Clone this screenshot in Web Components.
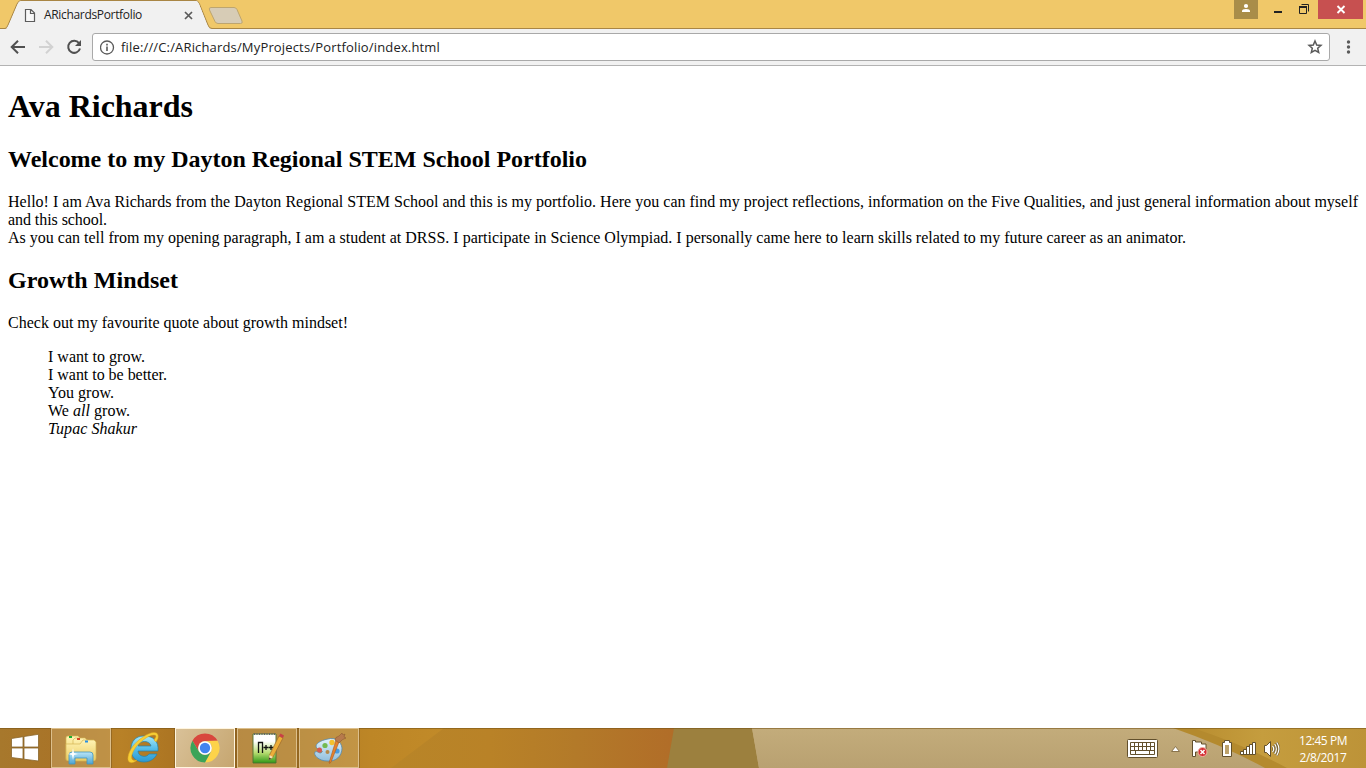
<!DOCTYPE html>
<html lang="en"><head><meta charset="utf-8"><title>ARichardsPortfolio</title>
<style>html,body{margin:0;height:100%;overflow:hidden;background:#fff}</style></head>
<body>
<desktop-screen></desktop-screen>
<script>
const define=(name,css,html)=>customElements.define(name,class extends HTMLElement{
  constructor(){super();this.attachShadow({mode:'open'}).innerHTML=`<style>*{box-sizing:border-box}svg{display:block;flex:none}${css}</style>${html}`;}
});

/* A single line of text whose tracking is adjusted to a given width. */
customElements.define('fit-line',class extends HTMLElement{
  constructor(){super();this.attachShadow({mode:'open'}).innerHTML='<style>:host{display:block;white-space:nowrap}span{display:inline-block}</style><span><slot></slot></span>';}
  connectedCallback(){
    const s=this.shadowRoot.querySelector('span'),w=+this.getAttribute('width');
    const n=this.textContent.length,d=w-s.getBoundingClientRect().width;
    s.style.letterSpacing=(d/n)+'px';
  }
});

define('tab-strip',`:host{display:block;height:29px;background:linear-gradient(#f0c869 28px,#a98645 28px)}
.row{display:flex;height:29px;justify-content:space-between}
.tab{position:relative;width:260px;height:29px}
.bg{position:absolute;inset:0}
.label{position:relative;display:flex;align-items:center;height:29px;padding-left:24px;color:#222;font:12px "Open Sans",sans-serif}
.label fit-line{margin-left:8px;width:144px}
`,`<div class="row"><div class="tab">
<svg class="bg" width="260" height="29"><path d="M5 28.500Q7 28 8 25L17 4Q18.500 .5 21 .5H196Q198 .5 199.500 4L208 25Q209 28.500 212 28.500" fill="#f1f1f1" stroke="#a98645"/><path d="M6 29Q8 28 9 25L18 4Q19 1 21 1H196Q198 1 199 4L207 25Q208.500 29 212 29Z" fill="#f1f1f1"/><path d="M211 7.500H234Q236 7.500 237 9.500L242 21Q243 23.500 240.500 23.500H218Q216 23.500 215 21.500L209.500 10Q208.500 7.500 211 7.500Z" fill="#d7ccb6" stroke="#bda56f"/></svg>
<div class="label"><svg width="12" height="14"><path d="M1.500 1.500H7L10.500 5V13.500H1.500ZM6.500 1.500V5.500H10.500" fill="#f8f8f8" stroke="#5c5c5c" stroke-width="1.200"/></svg><fit-line width="98">ARichardsPortfolio</fit-line>
<svg width="9" height="9" style="margin-left:-4px;margin-top:1px"><path d="M1 1 8 8M8 1 1 8" stroke="#5a5a5a" stroke-width="1.700"/></svg></div></div>
<svg width="146" height="29"><rect x="14" width="24" height="19" fill="#a98d49"/><circle cx="26" cy="6" r="2.100" fill="#fff"/><path d="M22 12V11Q22 9 26 9T30 11V12Z" fill="#fff"/><path d="M54 11H62V13H54Z" fill="#222"/><path d="M81.500 4.500H88.500V11.500" fill="none" stroke="#222"/><path d="M79.500 6.500H86.500V13.500H79.500Z" fill="none" stroke="#222"/><path d="M79 7H87" stroke="#222" stroke-width="2"/><rect x="98" width="45" height="19" fill="#c75050"/><path d="M117.500 6 124.500 13M124.500 6 117.500 13" stroke="#fff" stroke-width="1.900"/></svg></div>`);

define('address-bar',`:host{display:flex;align-items:center;height:37px;background:#f1f1f1;border-bottom:1px solid #b3b3b3}
.box{display:flex;align-items:center;width:1238px;height:28px;border:1px solid #a9a9a9;border-radius:3px;background:#fff;padding-left:7px;font:13px "Open Sans",sans-serif;color:#222}
fit-line{margin-left:6px;flex:1}`,`<svg width="92" height="36"><g fill="none" stroke-width="2"><path d="M25 18H12M18 11.700 11.700 18 18 24.300" stroke="#505050"/><path d="M39 18H52M46 11.700 52.300 18 46 24.300" stroke="#d2d2d2"/><path d="M79 14.200A6 6 0 1 0 80 19.500" stroke="#505050"/></g><path d="M81 11V17H75Z" fill="#505050"/></svg>
<div class="box"><svg width="15" height="15"><circle cx="7" cy="7.500" r="6.500" fill="none" stroke="#5a5a5a" stroke-width="1.300"/><path d="M7 6.500V11M7 3.700V5.400" stroke="#5a5a5a" stroke-width="1.600"/></svg><fit-line width="319">file:///C:/ARichards/MyProjects/Portfolio/index.html</fit-line>
<svg width="24" height="20"><path d="M10 4 11.700 8 16 8.400 12.700 11.300 13.700 15.500 10 13.300 6.300 15.500 7.300 11.300 4 8.400 8.300 8Z" fill="none" stroke="#5a5a5a" stroke-width="1.500"/></svg></div>
<svg width="36" height="36"><g fill="#5a5a5a"><circle cx="18.500" cy="13" r="1.700"/><circle cx="18.500" cy="18" r="1.700"/><circle cx="18.500" cy="23" r="1.700"/></g></svg>`);

define('portfolio-page',`:host{display:block;flex:1;min-height:0;overflow:hidden;background:#fff;padding:0 8px;color:#000;font:16px/18px "Liberation Serif",serif}
h1{font-size:32px;line-height:37px;margin:22px 0 21px}h2{font-size:24px;line-height:27px;margin:20px 0}p{margin:0}blockquote{margin:16px 40px}`,
`<h1><fit-line width="185">Ava Richards</fit-line></h1>
<h2><fit-line width="579">Welcome to my Dayton Regional STEM School Portfolio</fit-line></h2>
<p><fit-line width="1350">Hello! I am Ava Richards from the Dayton Regional STEM School and this is my portfolio. Here you can find my project reflections, information on the Five Qualities, and just general information about myself</fit-line>
<fit-line width="99">and this school.</fit-line>
<fit-line width="1178">As you can tell from my opening paragraph, I am a student at DRSS. I participate in Science Olympiad. I personally came here to learn skills related to my future career as an animator.</fit-line></p>
<h2><fit-line width="170">Growth Mindset</fit-line></h2>
<p><fit-line width="340">Check out my favourite quote about growth mindset!</fit-line></p>
<blockquote><fit-line width="97">I want to grow.</fit-line><fit-line width="119">I want to be better.</fit-line><fit-line width="66">You grow.</fit-line><fit-line width="82">We <em>all</em> grow.</fit-line><fit-line width="89"><i>Tupac Shakur</i></fit-line></blockquote>`);

define('task-button',`:host{display:flex;width:60px;height:40px;align-items:center;justify-content:center;border:1px solid transparent}
:host([open]){border-color:#dcbf8c;background:#cfae7468;box-shadow:0 0 0 1px #80591c90}
:host([active]){border-color:#fff5df;background:linear-gradient(120deg,#d9c198,#c6a670)}`,`<slot></slot>`);

define('system-tray',`:host{display:flex;width:240px;height:40px;color:#fff;font:12px/17px "Open Sans",sans-serif}
.clock{width:54px;padding-top:4px;display:flex;flex-direction:column;align-items:center}`,
`<svg width="170" height="40"><g stroke="#62502c" stroke-linejoin="round">
<rect x="1.500" y="11.500" width="30" height="18" rx="1" fill="#fff"/><path d="M4.500 14.500H28.500V26.500H4.500ZM4.500 18.500H28.500M4.500 22.500H28.500M8.500 14.500V22.500M12.500 14.500V22.500M16.500 14.500V22.500M20.500 14.500V22.500M24.500 14.500V22.500M9.500 22.500V26.500M23.500 22.500V26.500" fill="none"/>
<path d="M45.500 23.500 49.500 18.500 53.500 23.500Z" fill="#fff" stroke="#8a744d"/>
<path d="M66.500 12.500H69.500V14H75.500V16H80V24H69.500V28.500H66.500Z" fill="#fff"/>
<path d="M96.500 14.500H98.500V12.500H103.500V14.500H105.500V28.500H96.500Z" fill="#fff"/><path d="M99 17V26H103V17Z" fill="#bda26b" stroke="none"/>
<path d="M114.500 23.500H117.500V21.500H120.500V18.500H123.500V16.500H126.500V14.500H129.500V26.500H114.500Z" fill="#fff"/><path d="M117.500 22V26M120.500 19V26M123.500 17V26M126.500 15V26"/>
<path d="M138.500 17.500H140.500L144.500 13.500V28.500L140.500 24.500H138.500Z" fill="#fff"/></g>
<circle cx="76.500" cy="24" r="4.500" fill="#d42c31" stroke="#f4b4a6"/><path d="M74.500 22 78.500 26M78.500 22 74.500 26" stroke="#fff" stroke-width="1.500"/>
<path d="M146.500 18Q149 21 146.500 24M148.700 16Q152 21 148.700 26M150.800 14.500Q155 21 150.800 27.500" fill="none" stroke="#74602f" stroke-width="2.400"/><path d="M146.500 18Q149 21 146.500 24M148.700 16Q152 21 148.700 26M150.800 14.500Q155 21 150.800 27.500" fill="none" stroke="#fff" stroke-width="1.200"/></svg>
<div class="clock"><fit-line width="48">12:45 PM</fit-line><fit-line width="47">2/8/2017</fit-line></div>`);

define('task-bar',`:host{display:flex;height:40px;position:relative;overflow:hidden;background:#c0a876}
.paper{position:absolute;inset:0}.apps,system-tray{position:relative}.apps{display:flex;gap:2px}.start{width:49px;height:40px}.space{flex:1}`,
`<svg class="paper" width="1366" height="40"><defs>
<linearGradient id="g"><stop offset="0" stop-color="#a7782c"/><stop offset=".08" stop-color="#a97428"/><stop offset=".18" stop-color="#b88127"/><stop offset=".25" stop-color="#ad7623"/><stop offset=".35" stop-color="#a87223"/><stop offset=".45" stop-color="#b07b25"/><stop offset=".55" stop-color="#bd8626"/><stop offset=".68" stop-color="#c28b29"/><stop offset="1" stop-color="#b98226"/></linearGradient>
<linearGradient id="h"><stop offset="0" stop-color="#b88528"/><stop offset=".35" stop-color="#b98227"/><stop offset=".65" stop-color="#b37a29"/><stop offset="1" stop-color="#b16d28"/></linearGradient>
<linearGradient id="t" x2="0" y2="1"><stop stop-color="#c3ac7b"/><stop offset="1" stop-color="#b9a171"/></linearGradient><linearGradient id="y"><stop stop-color="#b98e30"/><stop offset=".4" stop-color="#c59d3e"/><stop offset="1" stop-color="#bd9338"/></linearGradient></defs>
<rect width="674" height="40" fill="url(#g)"/><path d="M444 0H674V40H391Z" fill="url(#h)"/><path d="M674 0H752L759 40H667Z" fill="#9c803e"/><path d="M752 0H1366V40H759Z" fill="url(#t)"/><path d="M1173 0H1366V40H1265Q1225 18 1173 0Z" fill="#b48a2e"/><path d="M1193 0H1366V40H1287Q1245 17 1193 0Z" fill="url(#y)"/><path d="M0 .5H1366" stroke="#765316" opacity=".55"/></svg>
<div class="apps">
<svg class="start" width="49" height="40"><g fill="#fff" stroke="#89662c" stroke-width=".8"><path d="M11.500 10.500 23 8.700V19H11.500ZM24 8.500 38.500 6.300V19H24ZM11.500 20H23V31L11.500 29.500ZM24 20H38.500V33L24 31.200Z"/></g></svg>
<task-button open><svg width="36" height="36" viewBox="0 0 36 36"><defs><linearGradient id="fa" x2="0" y2="1"><stop stop-color="#fff3b3"/><stop offset="1" stop-color="#ebcb61"/></linearGradient><linearGradient id="fb" x2="0" y2="1"><stop stop-color="#b9e5f8"/><stop offset="1" stop-color="#4da4d2"/></linearGradient></defs><g stroke="#d4b654" stroke-width=".7"><path d="M3 8Q3 6 5 6H15L17 8V30H3Z" fill="url(#fa)"/><path d="M10 10 12 8H22L24 10H25V30H10Z" fill="url(#fa)"/><path d="M3 14H17L20 10H31L33 12V28Q33 31 30 31H6Q3 31 3 28Z" fill="url(#fa)"/></g><path d="M6 7H9" stroke="#1bad34" stroke-width="2"/><path d="M14 9H17" stroke="#d94425" stroke-width="2"/><path d="M22 11.500H25" stroke="#288fe1" stroke-width="2"/><path d="M6 34V25Q6 22 9 22H27Q30 22 30 25V34H24V28H12V34Z" fill="url(#fb)" stroke="#4295bd" stroke-width=".8"/><path d="M10 18 11 23 15 24 11 25 10 30 9 25 5 24 9 23Z" fill="#fff"/></svg></task-button>
<task-button><svg width="36" height="36" viewBox="0 0 36 36"><defs><linearGradient id="ie" x2="0" y2="1"><stop stop-color="#a8e9f8"/><stop offset=".5" stop-color="#54bce8"/><stop offset="1" stop-color="#2c99d2"/></linearGradient></defs><path d="M19 6C10 6 6 12 6 19C6 27 11 32 19 32C26 32 30 28 32 24H24C22 28 13 27 13 21H33C34 11 28 6 19 6ZM13 16C14 10 25 10 26 16Z" fill="url(#ie)" stroke="#2383ad" stroke-width=".7"/><path d="M29 10Q33 5 29 5C23 5 13 13 9 20C5 27 6 32 12 30C8 34 2 34 3 27C4 20 10 12 18 7C25 2 32 1 33 5Q34 8 31 12Z" fill="#f7cf35" stroke="#dba21f" stroke-width=".5"/></svg></task-button>
<task-button open active><svg width="30" height="30" viewBox="-15 -15 30 30"><path d="M-12.560 -7.250A14.500 14.500 0 0 1 12.560 -7.250L0-7A7 7 0 0 0-6.060 3.500Z" fill="#d8473d"/><path d="M12.560-7.250A14.500 14.500 0 0 1 0 14.500L6.060 3.500A7 7 0 0 0 0-7Z" fill="#fdd34a"/><path d="M0 14.500A14.500 14.500 0 0 1-12.560-7.250L-6.060 3.500A7 7 0 0 0 6.060 3.500Z" fill="#3ba458"/><circle r="6.800" fill="#fff"/><circle r="5.200" fill="#4384ef"/></svg></task-button>
<task-button open><svg width="36" height="36" viewBox="0 0 36 36"><defs><linearGradient id="np" x2="0" y2="1"><stop offset=".25" stop-color="#fff"/><stop offset=".65" stop-color="#b6dc70"/><stop offset="1" stop-color="#2f9816"/></linearGradient></defs><path d="M4 4H27V33H4Z" fill="url(#np)" stroke="#4d7131" stroke-width=".9"/><path d="M5 4H27" stroke="#666" stroke-width="2" stroke-dasharray="1 1.500"/><path d="M9.500 23V12.500H13.500V23M17 15V20M14.500 17.500H19.500M22 15V20M19.800 17.500H24.500" fill="none" stroke="#111" stroke-width="1.300"/><path d="M20 30 20.500 25 30 6 34 8 24 27Z" fill="#edae39" stroke="#9c682b" stroke-width=".7"/><path d="M30 6 31.500 3.500 35 5.500 34 8Z" fill="#c84045"/><path d="M20 30 20.500 25 24 27Z" fill="#f6dfb2"/><path d="M20 30 20.300 27.500 22 28.500Z" fill="#222"/></svg></task-button>
<task-button open><svg width="36" height="36" viewBox="0 0 36 36"><defs><linearGradient id="pa" x2="0" y2="1"><stop stop-color="#e1f2fb"/><stop offset="1" stop-color="#91bfdd"/></linearGradient></defs><path d="M17 9C24 7 30 11 31 18C31 26 25 32 16 31C8 31 2 25 4 22C6 20 9 25 11 22C13 20 5 20 5 16C6 12 12 10 17 9Z" fill="url(#pa)" stroke="#5489ad" stroke-width=".8"/><circle cx="8.500" cy="20" r="2.500" fill="#d65b50"/><circle cx="14" cy="15.500" r="2.600" fill="#74ba50"/><circle cx="21" cy="12.500" r="2.700" fill="#f4c12e"/><circle cx="16.500" cy="22" r="2" fill="#b48949"/><circle cx="26" cy="21" r="2.600" fill="#4a9add"/><path d="M28 12 20 32Q19 34 18 33L25 10Z" fill="#e6822b" stroke="#a85922" stroke-width=".6"/><path d="M24 10Q24 7 28 6L31 3 32 5 34 4 33 7 35 8Q31 9 28 13Z" fill="#b77a4c" stroke="#87552f" stroke-width=".5"/></svg></task-button>
</div><div class="space"></div><system-tray></system-tray>`);

define('desktop-screen',`:host{display:flex;flex-direction:column;width:1366px;height:768px}tab-strip,address-bar,task-bar{flex:none}`,`<tab-strip></tab-strip><address-bar></address-bar><portfolio-page></portfolio-page><task-bar></task-bar>`);
</script></body></html>
